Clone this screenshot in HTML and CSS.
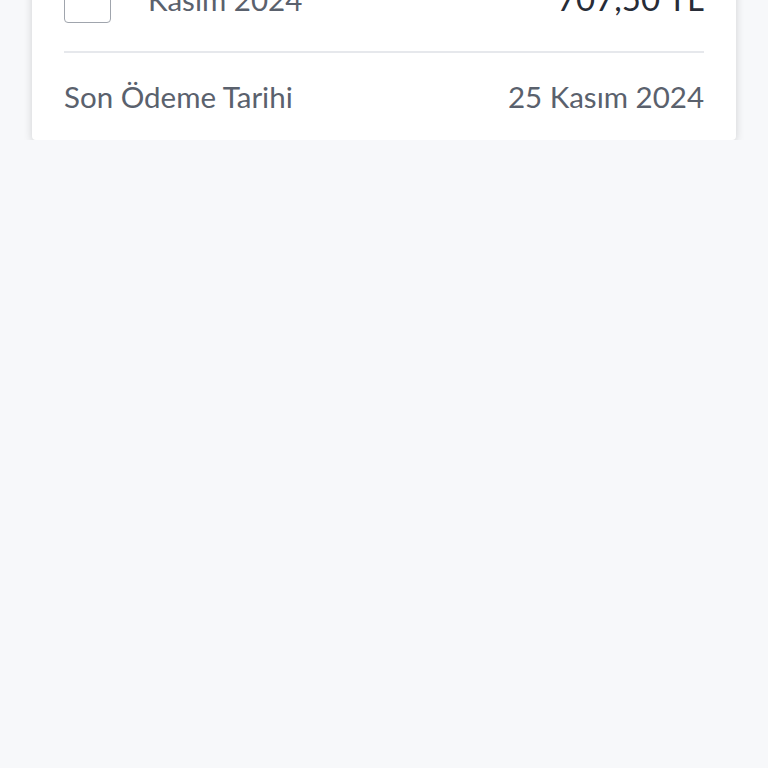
FILE: index.html
```html
<!DOCTYPE html>
<html lang="tr">
<head>
    <meta charset="UTF-8">
    <meta name="viewport" content="width=device-width, initial-scale=1.0">
    <title>Fatura Detayı</title>
    <link rel="stylesheet" href="styles.css">
</head>
<body>
    <div class="card">
        <div class="row row-invoice">
            <div class="invoice-left">
                <span class="checkbox"></span>
                <span class="period">Kasım 2024</span>
            </div>
            <span class="amount">707,50 TL</span>
        </div>
        <div class="row row-due">
            <span class="label">Son Ödeme Tarihi</span>
            <span class="value">25 Kasım 2024</span>
        </div>
    </div>
</body>
</html>
```

FILE: styles.css
```css
body {
    font-family: 'Lato', 'Noto Sans', sans-serif;
    margin: 0;
    padding: 0 32px;
    background-color: #f7f8fa;
    color: #5a616d;
}
.card {
    margin-top: -52px;
    background: #fff;
    padding: 0 32px;
    border-radius: 4px;
    box-shadow: 0 2px 8px rgba(0, 0, 0, 0.16);
}
.row {
    display: flex;
    justify-content: space-between;
    align-items: center;
    font-size: 29.5px;
    line-height: 34px;
}
.row-invoice {
    padding: 28px 0;
    border-bottom: 2px solid #e6e8ec;
}
.invoice-left {
    display: flex;
    align-items: center;
    gap: 37px;
}
.checkbox {
    width: 45px;
    height: 45px;
    border: 1.5px solid #a0a5ad;
    border-radius: 4px;
}
.amount {
    color: #272c37;
    font-size: 33px;
    margin-bottom: 4px;
}
.row-due {
    padding: 27px 0 26px;
}
```
